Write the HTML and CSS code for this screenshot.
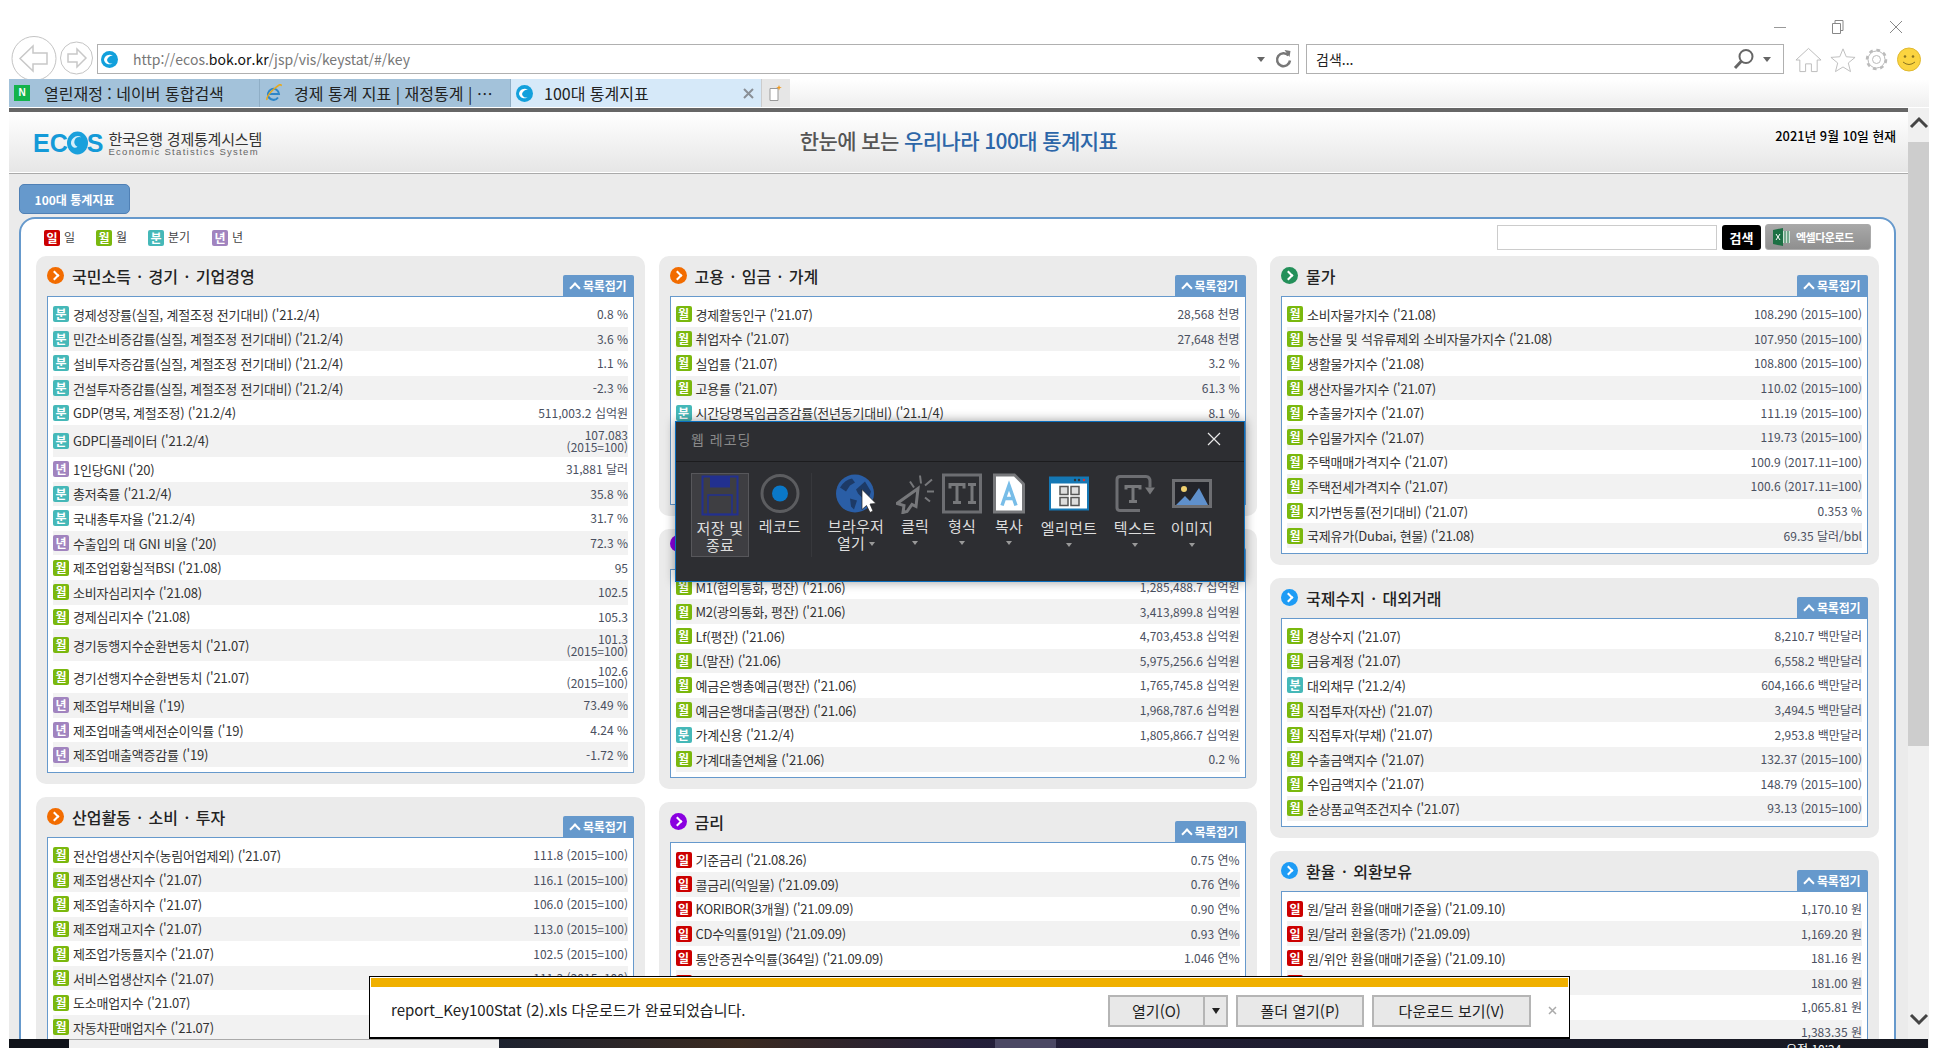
FILE: index.html
```html
<!DOCTYPE html>
<html lang="ko">
<head>
  <meta charset="UTF-8">
  <title>100대 통계지표</title>
  <link rel="stylesheet" href="styles.css">
</head>
<body>
  <header class="chrome">
    <div class="caption">
      <svg class="cap-btn" width="14" height="14" viewBox="0 0 14 14"><path d="M1 7.5h12" stroke="#999" fill="none"/></svg>
      <svg class="cap-btn" width="14" height="14" viewBox="0 0 14 14"><path d="M1.5 3.5h8v10h-8zM4 3.500V.5h8v10H9.500" stroke="#888" fill="none"/></svg>
      <svg class="cap-btn" width="14" height="14" viewBox="0 0 14 14"><path d="M1 1l12 12M13 1L1 13" stroke="#888" fill="none"/></svg>
    </div>
    <div class="navrow">
      <svg class="nav-back" width="48" height="45" viewBox="0 0 48 45"><circle cx="24" cy="22.500" r="22" fill="#fff" stroke="#c4c4c4"/><path d="M10 22.500L23 10v7h14v11H23v7z" fill="none" stroke="#c8c8c8" stroke-width="1.500"/></svg>
      <svg class="nav-fwd" width="33" height="34" viewBox="0 0 33 34"><circle cx="16.500" cy="17" r="16" fill="#fff" stroke="#c4c4c4"/><path d="M26 17l-9-9v5H8v8h9v5z" fill="none" stroke="#c8c8c8" stroke-width="1.500"/></svg>
      <div class="addr">
        <svg class="ie-ball" width="17" height="17" viewBox="0 0 17 17"><circle cx="8.500" cy="8.500" r="8.500" fill="#12a0dc"/><path d="M3 9a5.500 5.500 0 0 1 9-4 5 5 0 0 0-6 4 4 4 0 0 0 6 3 5.500 5.500 0 0 1-9-3z" fill="#fff"/></svg>
        <span class="url">http://ecos.<b>bok.or.kr</b>/jsp/vis/keystat/#/key</span>
        <span class="drop"></span>
        <svg width="18" height="20" viewBox="0 0 18 20"><path d="M13.500 6.500a6.500 6.500 0 1 0 1.500 5" fill="none" stroke="#777" stroke-width="2.500"/><path d="M9.500 1l6 1-1 6z" fill="#777"/></svg>
      </div>
      <div class="srch">
        <span class="srch-txt">검색...</span>
        <svg width="22" height="22" viewBox="0 0 22 22"><circle cx="13" cy="8.500" r="6.500" fill="none" stroke="#666" stroke-width="2"/><path d="M8.500 13L2 20" stroke="#666" stroke-width="3"/></svg>
        <span class="drop"></span>
      </div>
      <div class="tools">
        <svg width="27" height="26" viewBox="0 0 28 26"><path d="M1 13L14 1l13 12h-4v12h-6v-8h-6v8H5V13z" fill="none" stroke="#bbb"/></svg>
        <svg width="26" height="26" viewBox="0 0 28 26"><path d="M14 1l3.500 8.500 9.500.700-7.300 6 2.400 9.300L14 20.500l-8.100 5 2.400-9.300-7.300-6 9.500-.700z" fill="none" stroke="#bbb"/></svg>
        <svg width="25" height="25" viewBox="0 0 25 25"><circle cx="12.500" cy="12.500" r="9" fill="none" stroke="#bbb" stroke-width="3.500" stroke-dasharray="3.500 3.500"/><circle cx="12.500" cy="12.500" r="8.500" fill="#fff" stroke="#bbb"/><circle cx="12.500" cy="12.500" r="4" fill="none" stroke="#bbb"/></svg>
        <svg width="24" height="25" viewBox="0 0 24 25"><circle cx="12" cy="12.500" r="11.500" fill="#fbd440" stroke="#e0b930"/><circle cx="8" cy="9.500" r="1.300" fill="#8a7420"/><circle cx="16" cy="9.500" r="1.300" fill="#8a7420"/><path d="M6 15q6 5 12 0" fill="none" stroke="#8a7420"/></svg>
      </div>
    </div>
    <div class="tabrow">
      <div class="tab">
        <i class="n-ico">N</i><span class="tab-txt">열린재정 : 네이버 통합검색</span>
      </div>
      <div class="tab">
        <svg class="tab-ico" width="17" height="18" viewBox="0 0 17 18"><path d="M3 10h11a5.500 5.500 0 1 0-1 3.500M3 10a5.500 5.500 0 0 0 10 3.500" fill="none" stroke="#2f86c8" stroke-width="2"/><path d="M2 16Q1 12 9 5t7-3" fill="none" stroke="#e8a91c" stroke-width="1.500"/></svg>
        <span class="tab-txt ellip">경제 통계 지표 | 재정통계 | 기획재정부</span>
      </div>
      <div class="tab tab-on">
        <svg class="tab-ico" width="17" height="17" viewBox="0 0 17 17"><circle cx="8.500" cy="8.500" r="8.500" fill="#12a0dc"/><path d="M3 9a5.500 5.500 0 0 1 9-4 5 5 0 0 0-6 4 4 4 0 0 0 6 3 5.500 5.500 0 0 1-9-3z" fill="#fff"/></svg>
        <span class="tab-txt">100대 통계지표</span>
        <svg class="tab-x" width="11" height="11" viewBox="0 0 11 11"><path d="M1 1l9 9M10 1l-9 9" stroke="#8a8f96" stroke-width="2"/></svg>
      </div>
      <div class="tab-new">
        <svg width="14" height="18" viewBox="0 0 14 18"><path d="M1 4.500h8v12H1z" fill="#fff" stroke="#999"/><path d="M10 1l.800 2 2 .500-2 .800L10 6.500l-.800-2.200-2-.800 2-.500z" fill="#f09a20"/></svg>
      </div>
      <div class="tab-fill"></div>
    </div>
  </header>

  <div class="content">
    <div class="page">
      <div class="top-line"></div>
      <div class="site-head">
        <div class="logo">
          <div class="logo-mark">EC<svg width="21" height="24" viewBox="0 0 22 24"><ellipse cx="11" cy="12" rx="11" ry="12" fill="#1aa0dc"/><path d="M5 15a7 7 0 0 1 10-9 5 5 0 0 0-4 10 4 4 0 0 1-6-1z" fill="#d6eefa"/></svg>S</div>
          <div class="logo-txt">
            <strong>한국은행 경제통계시스템</strong>
            <span>Economic Statistics System</span>
          </div>
        </div>
        <h1 class="site-title">한눈에 보는 <em>우리나라 100대 통계지표</em></h1>
        <div class="site-date">2021년 9월 10일 현재</div>
      </div>

      <main class="main">
        <button class="main-tab">100대 통계지표</button>
        <section class="board">
          <div class="board-bar">
            <ul class="legend">
              <li><i class="chip day">일</i>일</li>
              <li><i class="chip mon">월</i>월</li>
              <li><i class="chip qtr">분</i>분기</li>
              <li><i class="chip yr">년</i>년</li>
            </ul>
            <div class="board-tools">
              <input class="find" type="text">
              <button class="find-btn">검색</button>
              <button class="xls-btn">
                <svg width="17" height="18" viewBox="0 0 17 18"><path d="M0 2l10-2v18L0 16z" fill="#1d7044"/><path d="M3 6l4 6M7 6l-4 6" stroke="#fff"/><path d="M10 3h7v12h-7z" fill="#cfe3d6"/><path d="M12 3v12M15 3v12" stroke="#1d7044"/></svg>엑셀다운로드
              </button>
            </div>
          </div>

          <div class="cols">
            <div class="col">
              <article class="panel">
                <div class="panel-head">
                  <h2 class="panel-title"><i class="dot orange"></i>국민소득 · 경기 · 기업경영</h2>
                  <button class="fold">목록접기</button>
                </div>
                <ul class="rows">
                  <li class="row"><i class="chip qtr">분</i><span class="lbl">경제성장률(실질, 계절조정 전기대비) ('21.2/4)</span><span class="val">0.8 %</span></li>
                  <li class="row"><i class="chip qtr">분</i><span class="lbl">민간소비증감률(실질, 계절조정 전기대비) ('21.2/4)</span><span class="val">3.6 %</span></li>
                  <li class="row"><i class="chip qtr">분</i><span class="lbl">설비투자증감률(실질, 계절조정 전기대비) ('21.2/4)</span><span class="val">1.1 %</span></li>
                  <li class="row"><i class="chip qtr">분</i><span class="lbl">건설투자증감률(실질, 계절조정 전기대비) ('21.2/4)</span><span class="val">-2.3 %</span></li>
                  <li class="row"><i class="chip qtr">분</i><span class="lbl">GDP(명목, 계절조정) ('21.2/4)</span><span class="val">511,003.2 십억원</span></li>
                  <li class="row tall"><i class="chip qtr">분</i><span class="lbl">GDP디플레이터 ('21.2/4)</span><span class="val">107.083<br>(2015=100)</span></li>
                  <li class="row"><i class="chip yr">년</i><span class="lbl">1인당GNI ('20)</span><span class="val">31,881 달러</span></li>
                  <li class="row"><i class="chip qtr">분</i><span class="lbl">총저축률 ('21.2/4)</span><span class="val">35.8 %</span></li>
                  <li class="row"><i class="chip qtr">분</i><span class="lbl">국내총투자율 ('21.2/4)</span><span class="val">31.7 %</span></li>
                  <li class="row"><i class="chip yr">년</i><span class="lbl">수출입의 대 GNI 비율 ('20)</span><span class="val">72.3 %</span></li>
                  <li class="row"><i class="chip mon">월</i><span class="lbl">제조업업황실적BSI ('21.08)</span><span class="val">95</span></li>
                  <li class="row"><i class="chip mon">월</i><span class="lbl">소비자심리지수 ('21.08)</span><span class="val">102.5</span></li>
                  <li class="row"><i class="chip mon">월</i><span class="lbl">경제심리지수 ('21.08)</span><span class="val">105.3</span></li>
                  <li class="row tall"><i class="chip mon">월</i><span class="lbl">경기동행지수순환변동치 ('21.07)</span><span class="val">101.3<br>(2015=100)</span></li>
                  <li class="row tall"><i class="chip mon">월</i><span class="lbl">경기선행지수순환변동치 ('21.07)</span><span class="val">102.6<br>(2015=100)</span></li>
                  <li class="row"><i class="chip yr">년</i><span class="lbl">제조업부채비율 ('19)</span><span class="val">73.49 %</span></li>
                  <li class="row"><i class="chip yr">년</i><span class="lbl">제조업매출액세전순이익률 ('19)</span><span class="val">4.24 %</span></li>
                  <li class="row"><i class="chip yr">년</i><span class="lbl">제조업매출액증감률 ('19)</span><span class="val">-1.72 %</span></li>
                </ul>
              </article>
              <article class="panel">
                <div class="panel-head">
                  <h2 class="panel-title"><i class="dot orange"></i>산업활동 · 소비 · 투자</h2>
                  <button class="fold">목록접기</button>
                </div>
                <ul class="rows">
                  <li class="row"><i class="chip mon">월</i><span class="lbl">전산업생산지수(농림어업제외) ('21.07)</span><span class="val">111.8 (2015=100)</span></li>
                  <li class="row"><i class="chip mon">월</i><span class="lbl">제조업생산지수 ('21.07)</span><span class="val">116.1 (2015=100)</span></li>
                  <li class="row"><i class="chip mon">월</i><span class="lbl">제조업출하지수 ('21.07)</span><span class="val">106.0 (2015=100)</span></li>
                  <li class="row"><i class="chip mon">월</i><span class="lbl">제조업재고지수 ('21.07)</span><span class="val">113.0 (2015=100)</span></li>
                  <li class="row"><i class="chip mon">월</i><span class="lbl">제조업가동률지수 ('21.07)</span><span class="val">102.5 (2015=100)</span></li>
                  <li class="row"><i class="chip mon">월</i><span class="lbl">서비스업생산지수 ('21.07)</span><span class="val">111.3 (2015=100)</span></li>
                  <li class="row"><i class="chip mon">월</i><span class="lbl">도소매업지수 ('21.07)</span><span class="val"></span></li>
                  <li class="row"><i class="chip mon">월</i><span class="lbl">자동차판매업지수 ('21.07)</span><span class="val"></span></li>
                </ul>
              </article>
            </div>

            <div class="col">
              <article class="panel">
                <div class="panel-head">
                  <h2 class="panel-title"><i class="dot orange"></i>고용 · 임금 · 가계</h2>
                  <button class="fold">목록접기</button>
                </div>
                <ul class="rows">
                  <li class="row"><i class="chip mon">월</i><span class="lbl">경제활동인구 ('21.07)</span><span class="val">28,568 천명</span></li>
                  <li class="row"><i class="chip mon">월</i><span class="lbl">취업자수 ('21.07)</span><span class="val">27,648 천명</span></li>
                  <li class="row"><i class="chip mon">월</i><span class="lbl">실업률 ('21.07)</span><span class="val">3.2 %</span></li>
                  <li class="row"><i class="chip mon">월</i><span class="lbl">고용률 ('21.07)</span><span class="val">61.3 %</span></li>
                  <li class="row"><i class="chip qtr">분</i><span class="lbl">시간당명목임금증감률(전년동기대비) ('21.1/4)</span><span class="val">8.1 %</span></li>
                  <li class="row"></li>
                  <li class="row"></li>
                  <li class="row"></li>
                </ul>
              </article>
              <article class="panel">
                <div class="panel-head">
                  <h2 class="panel-title"><i class="dot purple"></i></h2>
                  <button class="fold">목록접기</button>
                </div>
                <ul class="rows">
                  <li class="row"><i class="chip mon">월</i><span class="lbl">M1(협의통화, 평잔) ('21.06)</span><span class="val">1,285,488.7 십억원</span></li>
                  <li class="row"><i class="chip mon">월</i><span class="lbl">M2(광의통화, 평잔) ('21.06)</span><span class="val">3,413,899.8 십억원</span></li>
                  <li class="row"><i class="chip mon">월</i><span class="lbl">Lf(평잔) ('21.06)</span><span class="val">4,703,453.8 십억원</span></li>
                  <li class="row"><i class="chip mon">월</i><span class="lbl">L(말잔) ('21.06)</span><span class="val">5,975,256.6 십억원</span></li>
                  <li class="row"><i class="chip mon">월</i><span class="lbl">예금은행총예금(평잔) ('21.06)</span><span class="val">1,765,745.8 십억원</span></li>
                  <li class="row"><i class="chip mon">월</i><span class="lbl">예금은행대출금(평잔) ('21.06)</span><span class="val">1,968,787.6 십억원</span></li>
                  <li class="row"><i class="chip qtr">분</i><span class="lbl">가계신용 ('21.2/4)</span><span class="val">1,805,866.7 십억원</span></li>
                  <li class="row"><i class="chip mon">월</i><span class="lbl">가계대출연체율 ('21.06)</span><span class="val">0.2 %</span></li>
                </ul>
              </article>
              <article class="panel">
                <div class="panel-head">
                  <h2 class="panel-title"><i class="dot purple"></i>금리</h2>
                  <button class="fold">목록접기</button>
                </div>
                <ul class="rows">
                  <li class="row"><i class="chip day">일</i><span class="lbl">기준금리 ('21.08.26)</span><span class="val">0.75 연%</span></li>
                  <li class="row"><i class="chip day">일</i><span class="lbl">콜금리(익일물) ('21.09.09)</span><span class="val">0.76 연%</span></li>
                  <li class="row"><i class="chip day">일</i><span class="lbl">KORIBOR(3개월) ('21.09.09)</span><span class="val">0.90 연%</span></li>
                  <li class="row"><i class="chip day">일</i><span class="lbl">CD수익률(91일) ('21.09.09)</span><span class="val">0.93 연%</span></li>
                  <li class="row"><i class="chip day">일</i><span class="lbl">통안증권수익률(364일) ('21.09.09)</span><span class="val">1.046 연%</span></li>
                  <li class="row"><i class="chip day">일</i><span class="lbl"></span><span class="val"></span></li>
                </ul>
              </article>
            </div>

            <div class="col">
              <article class="panel">
                <div class="panel-head">
                  <h2 class="panel-title"><i class="dot green"></i>물가</h2>
                  <button class="fold">목록접기</button>
                </div>
                <ul class="rows">
                  <li class="row"><i class="chip mon">월</i><span class="lbl">소비자물가지수 ('21.08)</span><span class="val">108.290 (2015=100)</span></li>
                  <li class="row"><i class="chip mon">월</i><span class="lbl">농산물 및 석유류제외 소비자물가지수 ('21.08)</span><span class="val">107.950 (2015=100)</span></li>
                  <li class="row"><i class="chip mon">월</i><span class="lbl">생활물가지수 ('21.08)</span><span class="val">108.800 (2015=100)</span></li>
                  <li class="row"><i class="chip mon">월</i><span class="lbl">생산자물가지수 ('21.07)</span><span class="val">110.02 (2015=100)</span></li>
                  <li class="row"><i class="chip mon">월</i><span class="lbl">수출물가지수 ('21.07)</span><span class="val">111.19 (2015=100)</span></li>
                  <li class="row"><i class="chip mon">월</i><span class="lbl">수입물가지수 ('21.07)</span><span class="val">119.73 (2015=100)</span></li>
                  <li class="row"><i class="chip mon">월</i><span class="lbl">주택매매가격지수 ('21.07)</span><span class="val">100.9 (2017.11=100)</span></li>
                  <li class="row"><i class="chip mon">월</i><span class="lbl">주택전세가격지수 ('21.07)</span><span class="val">100.6 (2017.11=100)</span></li>
                  <li class="row"><i class="chip mon">월</i><span class="lbl">지가변동률(전기대비) ('21.07)</span><span class="val">0.353 %</span></li>
                  <li class="row"><i class="chip mon">월</i><span class="lbl">국제유가(Dubai, 현물) ('21.08)</span><span class="val">69.35 달러/bbl</span></li>
                </ul>
              </article>
              <article class="panel">
                <div class="panel-head">
                  <h2 class="panel-title"><i class="dot blue"></i>국제수지 · 대외거래</h2>
                  <button class="fold">목록접기</button>
                </div>
                <ul class="rows">
                  <li class="row"><i class="chip mon">월</i><span class="lbl">경상수지 ('21.07)</span><span class="val">8,210.7 백만달러</span></li>
                  <li class="row"><i class="chip mon">월</i><span class="lbl">금융계정 ('21.07)</span><span class="val">6,558.2 백만달러</span></li>
                  <li class="row"><i class="chip qtr">분</i><span class="lbl">대외채무 ('21.2/4)</span><span class="val">604,166.6 백만달러</span></li>
                  <li class="row"><i class="chip mon">월</i><span class="lbl">직접투자(자산) ('21.07)</span><span class="val">3,494.5 백만달러</span></li>
                  <li class="row"><i class="chip mon">월</i><span class="lbl">직접투자(부채) ('21.07)</span><span class="val">2,953.8 백만달러</span></li>
                  <li class="row"><i class="chip mon">월</i><span class="lbl">수출금액지수 ('21.07)</span><span class="val">132.37 (2015=100)</span></li>
                  <li class="row"><i class="chip mon">월</i><span class="lbl">수입금액지수 ('21.07)</span><span class="val">148.79 (2015=100)</span></li>
                  <li class="row"><i class="chip mon">월</i><span class="lbl">순상품교역조건지수 ('21.07)</span><span class="val">93.13 (2015=100)</span></li>
                </ul>
              </article>
              <article class="panel">
                <div class="panel-head">
                  <h2 class="panel-title"><i class="dot blue"></i>환율 · 외환보유</h2>
                  <button class="fold">목록접기</button>
                </div>
                <ul class="rows">
                  <li class="row"><i class="chip day">일</i><span class="lbl">원/달러 환율(매매기준율) ('21.09.10)</span><span class="val">1,170.10 원</span></li>
                  <li class="row"><i class="chip day">일</i><span class="lbl">원/달러 환율(종가) ('21.09.09)</span><span class="val">1,169.20 원</span></li>
                  <li class="row"><i class="chip day">일</i><span class="lbl">원/위안 환율(매매기준율) ('21.09.10)</span><span class="val">181.16 원</span></li>
                  <li class="row"><i class="chip day">일</i><span class="lbl"></span><span class="val">181.00 원</span></li>
                  <li class="row"><i class="chip day">일</i><span class="lbl"></span><span class="val">1,065.81 원</span></li>
                  <li class="row"><i class="chip day">일</i><span class="lbl"></span><span class="val">1,383.35 원</span></li>
                </ul>
              </article>
            </div>
          </div>
        </section>
      </main>
    </div>

    <div class="scrollbar">
      <svg class="sb-arrow" width="20" height="14" viewBox="0 0 20 14"><path d="M2 11l8-8 8 8" fill="none" stroke="#444" stroke-width="3"/></svg>
      <div class="sb-thumb"></div>
      <div class="sb-track"></div>
      <svg class="sb-arrow" width="20" height="14" viewBox="0 0 20 14"><path d="M2 3l8 8 8-8" fill="none" stroke="#444" stroke-width="3"/></svg>
    </div>
  </div>

  <!-- 웹 레코딩 도구창 -->
  <aside class="recorder">
    <div class="rec-head">
      <span>웹 레코딩</span>
      <svg width="14" height="14" viewBox="0 0 14 14"><path d="M1 1l12 12M13 1L1 13" stroke="#e8e8e8" stroke-width="1.200"/></svg>
    </div>
    <div class="rec-bar">
      <div class="rec-btn rec-save">
        <svg width="38" height="41" viewBox="0 0 38 41"><path d="M1.500 1.500h35v38h-35z" fill="none" stroke="#22308f" stroke-width="2"/><path d="M9 1.500h20v11H9z" fill="#22308f"/><path d="M7 20h24v19.500H7z" fill="none" stroke="#22308f" stroke-width="1.500"/></svg>
        <span>저장 및<br>종료</span>
      </div>
      <div class="rec-btn rec-record">
        <svg width="40" height="40" viewBox="0 0 40 40"><circle cx="20" cy="20" r="18" fill="none" stroke="#5c5d60" stroke-width="3"/><circle cx="20" cy="20" r="8" fill="#0a78c8"/></svg>
        <span>레코드</span>
      </div>
      <div class="rec-sep"></div>
      <div class="rec-btn rec-browser">
        <svg width="40" height="40" viewBox="0 0 40 40"><circle cx="19" cy="20" r="19" fill="#2a5ea6"/><path d="M4 14q5-8 12-9l3 4-5 3-4 6zM20 16l9-8 6 10-2 6-6 1-5-5zM14 25l7 2-3 9-3-3z" fill="#1d3a66"/><path d="M26 16l14 14-6 .500 3 7-3 1.500-3.500-7L26 36z" fill="#fff" stroke="#222" stroke-width=".7"/></svg>
        <span>브라우저<br>열기<i class="caret"></i></span>
      </div>
      <div class="rec-btn rec-click">
        <svg width="38" height="40" viewBox="0 0 38 40"><path d="M22 15L1 30l7 2-1 7 4-1 5-7 4 2z" fill="none" stroke="#77787b" stroke-width="3"/><path d="M24 2l1 8M36 6l-7 6M38 18h-7M34 28l-5-4M14 8l4 6" stroke="#77787b" stroke-width="2"/></svg>
        <span>클릭</span><i class="caret"></i>
      </div>
      <div class="rec-btn rec-form">
        <svg width="40" height="40" viewBox="0 0 40 40"><path d="M1.500 1.500h37v37h-37z" fill="none" stroke="#6d6e72" stroke-width="3"/><path d="M8 15v-4h14v4M15 11v18M11 29h8M26 11h8M30 11v18M26 29h8" fill="none" stroke="#77787b" stroke-width="3"/></svg>
        <span>형식</span><i class="caret"></i>
      </div>
      <div class="rec-btn rec-copy">
        <svg width="32" height="40" viewBox="0 0 32 40"><path d="M0 0h22l10 10v30H0z" fill="#77787b"/><path d="M3 3h18l8 8v26H3z" fill="#fff"/><path d="M9 32l7-20 7 20M11.500 25h9" fill="none" stroke="#78bde8" stroke-width="3.500"/></svg>
        <span>복사</span><i class="caret"></i>
      </div>
      <div class="rec-btn rec-elem">
        <svg width="40" height="34" viewBox="0 0 40 34"><path d="M0 0h40v34H0z" fill="#1477b4"/><path d="M2 7h36v25H2z" fill="#fff"/><path d="M11 10h8v8h-8zM22 10h8v8h-8zM11 21h8v8h-8zM22 21h8v8h-8z" fill="#ddd" stroke="#555" stroke-width="1.500"/><circle cx="26" cy="3.500" r="1.200" fill="#333"/><circle cx="30" cy="3.500" r="1.200" fill="#333"/><circle cx="35" cy="3.500" r="1.200" fill="#e03030"/></svg>
        <span>엘리먼트</span><i class="caret"></i>
      </div>
      <div class="rec-btn rec-text">
        <svg width="41" height="38" viewBox="0 0 41 38"><path d="M31 2H5Q2 2 2 5v28q0 3 3 3h20" fill="none" stroke="#6d6e72" stroke-width="3"/><path d="M31 2q4 0 4 5v6" fill="none" stroke="#6d6e72" stroke-width="3"/><path d="M30 13h10l-5 7z" fill="#77787b"/><path d="M11 15v-3h14v3M18 12v15M14 27h8" fill="none" stroke="#77787b" stroke-width="3"/></svg>
        <span>텍스트</span><i class="caret"></i>
      </div>
      <div class="rec-btn rec-image">
        <svg width="40" height="29" viewBox="0 0 40 29"><path d="M1.500 1.500h37v26h-37z" fill="#23242a" stroke="#6d6e72" stroke-width="3"/><path d="M4 26l9-9 5 5 9-13 9 17z" fill="#5f90cc"/><circle cx="12" cy="10" r="3" fill="#f0d070"/></svg>
        <span>이미지</span><i class="caret"></i>
      </div>
    </div>
  </aside>

  <!-- IE 다운로드 알림 -->
  <aside class="dlbar">
    <div class="dl-stripe"></div>
    <div class="dl-body">
      <span class="dl-msg">report_Key100Stat (2).xls 다운로드가 완료되었습니다.</span>
      <div class="dl-split">
        <button class="dl-btn dl-open">열기(O)</button>
        <button class="dl-btn dl-more"><i></i></button>
      </div>
      <button class="dl-btn dl-folder">폴더 열기(P)</button>
      <button class="dl-btn dl-view">다운로드 보기(V)</button>
      <svg class="dl-x" width="9" height="9" viewBox="0 0 9 9"><path d="M1 1l7 7M8 1L1 8" stroke="#aaa" stroke-width="1.500"/></svg>
    </div>
  </aside>

  <footer class="taskbar">
    <div class="tb-start"></div>
    <div class="tb-search"></div>
    <div class="tb-apps">
      <div class="tb-active"></div>
    </div>
    <div class="tb-clock">오전 10:24</div>
  </footer>
</body>
</html>
```

FILE: styles.css
```css
html, body {
  margin: 0;
  height: 1048px;
  overflow: hidden;
  background: #fff;
}
body {
  position: relative;
  font-family: "Noto Sans CJK KR", "Noto Sans", sans-serif;
  font-size: 12px;
  color: #333;
}
ul { list-style: none; margin: 0; padding: 0; }
i { font-style: normal; }
button { font-family: inherit; cursor: pointer; }

/* browser chrome */
.chrome { height: 108px; background: #fff; }
.caption {
  height: 36px;
  display: flex;
  justify-content: flex-end;
  align-items: flex-start;
  padding: 20px 35px 0 0;
  box-sizing: border-box;
  gap: 38px;
}
.cap-btn { margin-left: 6px; }
.navrow {
  height: 43px;
  display: flex;
  align-items: center;
  padding-left: 10px;
}
.nav-back { margin-top: 1px; }
.nav-fwd { margin-left: 2px; margin-right: 4px; }
.addr, .srch {
  height: 30px;
  box-sizing: border-box;
  border: 1px solid #b0b0b0;
  display: flex;
  align-items: center;
  margin-top: 3px;
}
.addr { width: 1202px; padding: 0 5px 0 3px; }
.ie-ball { margin-right: 15px; }
.url { flex: 1; font-size: 14px; color: #777; }
.url b { font-weight: 400; color: #111; }
.drop {
  width: 0;
  height: 0;
  border-left: 4px solid transparent;
  border-right: 4px solid transparent;
  border-top: 5px solid #666;
  margin-right: 10px;
}
.srch { width: 478px; margin-left: 7px; padding: 0 0 0 9px; }
.srch-txt { flex: 1; font-size: 14px; color: #222; }
.srch .drop { margin: 0 12px 0 8px; }
.tools { display: flex; align-items: center; gap: 8px; margin-left: 11px; margin-top: 4px; }
.tabrow {
  height: 28px;
  margin-left: 9px;
  margin-right: 9px;
  display: flex;
  background: #fff;
}
.tab {
  width: 251px;
  height: 28px;
  box-sizing: border-box;
  background: #a3c2da;
  border-right: 1px solid #8faec6;
  display: flex;
  align-items: center;
  padding-left: 5px;
  font-size: 16px;
  color: #222;
}
.tab-on { background: #d6e9f9; border-right: 0; width: 250px; }
.tab-txt { margin-left: 14px; white-space: nowrap; }
.tab-ico + .tab-txt { margin-left: 12px; }
.ellip { width: 212px; overflow: hidden; text-overflow: ellipsis; }
.tab-on .tab-txt { margin-left: 11px; flex: 1; }
.tab-x { margin-right: 7px; }
.n-ico {
  width: 16px;
  height: 16px;
  background: #13b34c;
  color: #fff;
  font: bold 10px/16px "Liberation Sans", sans-serif;
  text-align: center;
}
.tab-ico { flex: none; }
.tab-new {
  width: 28px;
  background: #e6e6e6;
  border-left: 1px solid #ccc;
  display: flex;
  align-items: center;
  justify-content: center;
}
.tab-fill { flex: 1; background: linear-gradient(#fff, #efefef); }

/* page */
.content { display: flex; height: 940px; }
.page { width: 1899px; margin-left: 9px; overflow: hidden; background: #ebebeb; }
.top-line { height: 4px; background: #666; }
.site-head {
  height: 60px;
  background: linear-gradient(#fff, #e6e6e6);
  display: grid;
  grid-template-columns: 1fr auto 1fr;
  align-items: start;
  border-bottom: 1px solid #fff;
}
.logo { display: flex; margin: 18px 0 0 24px; }
.logo-mark {
  display: flex;
  align-items: center;
  height: 26px;
  font: bold 25px/26px "Liberation Sans", sans-serif;
  color: #149ad8;
}
.logo-mark svg { margin: 0 -1px; }
.logo-txt { margin-left: 5px; display: flex; flex-direction: column; }
.logo-txt strong { font-size: 15px; line-height: 17px; font-weight: 400; color: #333; letter-spacing: -.2px; }
.logo-txt span { font: 9.500px/10px "Liberation Sans", sans-serif; color: #666; letter-spacing: 1.300px; }
.site-title {
  margin: 15px 0 0;
  font-size: 21px;
  line-height: 27px;
  font-weight: 500;
  color: #555;
  letter-spacing: -.6px;
}
.site-title em { font-style: normal; color: #2c66a8; }
.site-date { justify-self: end; margin: 15px 12px 0 0; font-size: 12.800px; font-weight: 500; color: #000; line-height: 18px; }
.main { border-top: 1px solid #aaa; padding-left: 10px; }
.main-tab {
  display: block;
  margin-top: 10px;
  width: 111px;
  height: 30px;
  border: 1px solid #4f80b5;
  border-radius: 5px;
  background: #6699cc;
  color: #fff;
  font-size: 12px;
  font-weight: 700;
  padding: 0;
}
.board {
  width: 1877px;
  margin-top: 3px;
  box-sizing: border-box;
  border: 2px solid #6699cc;
  border-radius: 16px 16px 0 0;
  background: #fff;
  padding-bottom: 20px;
}
.board-bar {
  height: 37px;
  display: flex;
  justify-content: space-between;
  padding: 6px 23px 0 23px;
  box-sizing: border-box;
}
.legend {
  display: grid;
  grid-template-columns: 52px 52px 64px auto;
  margin-top: 5px;
  font-size: 12px;
  color: #444;
}
.legend li { display: flex; align-items: flex-start; line-height: 13px; }
.legend .chip { margin-right: 4px; }
.board-tools { display: flex; align-items: flex-start; }
.find {
  width: 220px;
  height: 25px;
  box-sizing: border-box;
  border: 1px solid #ccc;
  margin: 0;
}
.find-btn {
  width: 39px;
  height: 25px;
  margin-left: 5px;
  border: 0;
  border-radius: 3px;
  background: #000;
  color: #fff;
  font-size: 13px;
  font-weight: 700;
  padding: 0;
}
.xls-btn {
  width: 106px;
  height: 26px;
  margin-left: 4px;
  margin-top: -1px;
  border: 1px solid #aaa;
  border-radius: 3px;
  background: linear-gradient(#a8a8a8, #8f8f8f);
  color: #fff;
  font-size: 11px;
  font-weight: 700;
  display: flex;
  align-items: center;
  padding: 0 0 0 7px;
  gap: 6px;
  letter-spacing: -.5px;
}
.cols {
  display: grid;
  grid-template-columns: 609px 598px 609px;
  column-gap: 13.5px;
  padding-left: 15px;
}
.col { display: flex; flex-direction: column; gap: 13px; }
.panel {
  background: #ebebeb;
  border-radius: 10px;
  padding: 0 11px 11px;
}
.panel-head {
  height: 40px;
  display: flex;
  justify-content: space-between;
  align-items: flex-end;
}
.panel-title {
  align-self: flex-start;
  margin: 7px 0 0;
  display: flex;
  align-items: center;
  font-size: 16px;
  word-spacing: 2px;
  line-height: 26px;
  font-weight: 500;
  color: #222;
}
.dot {
  width: 17px;
  height: 17px;
  border-radius: 50%;
  margin: -1px 8px 0 0;
  position: relative;
}
.dot::after {
  content: "";
  position: absolute;
  left: 4px;
  top: 5px;
  width: 5px;
  height: 5px;
  border: solid #fff;
  border-width: 2px 2px 0 0;
  transform: rotate(45deg);
}
.orange { background: #f26c00; }
.purple { background: #8a00e0; }
.green { background: #24905a; }
.blue { background: #1e9cf5; }
.fold {
  width: 71px;
  height: 21px;
  border: 0;
  border-radius: 2px 2px 0 0;
  background: #6699cc;
  color: #fff;
  font-size: 12px;
  font-weight: 700;
  padding: 0 0 0 20px;
  position: relative;
  letter-spacing: -.2px;
  text-align: left;
  white-space: nowrap;
}
.fold::before {
  content: "";
  position: absolute;
  left: 8px;
  top: 9px;
  width: 6px;
  height: 6px;
  border: solid #fff;
  border-width: 2px 0 0 2px;
  transform: rotate(45deg);
}
.rows {
  background: #fff;
  border: 1px solid #6699cc;
  padding: 5px 5px;
}
.row {
  height: 24.600px;
  display: flex;
  align-items: center;
  font-size: 12px;
  line-height: 15px;
  white-space: nowrap;
}
.row:nth-child(even) { background: #f2f2f2; }
.tall { height: 32px; }
.lbl { margin-left: 4px; flex: 1; color: #333; font-size: 13px; letter-spacing: -.2px; }
.val { text-align: right; color: #4a5060; line-height: 12px; }
.chip {
  flex: none;
  width: 16px;
  height: 16px;
  border-radius: 2px;
  color: #fff;
  font-size: 12px;
  line-height: 16px;
  font-weight: 700;
  text-align: center;
}
.day { background: #cc0000; }
.mon { background: #7ab80e; }
.qtr { background: #45b8b8; }
.yr { background: #a184bf; }

/* scrollbar */
.scrollbar { width: 21px; display: flex; flex-direction: column; align-items: center; background: #f0f0f0; padding-bottom: 10px; box-sizing: border-box; }
.sb-arrow { flex: none; margin: 8px 0 12px; }
.sb-thumb { width: 100%; height: 604px; background: #cdcdcd; }
.sb-track { flex: 1; }

/* recorder window */
.recorder {
  position: absolute;
  left: 675px;
  top: 421px;
  width: 570px;
  height: 161px;
  box-sizing: border-box;
  border: 1px solid #0a6ebd;
  background: #2d2e32;
  box-shadow: 0 0 10px rgba(0, 0, 0, .4);
  color: #ddd;
  font-size: 15px;
}
.rec-head {
  height: 40px;
  box-sizing: border-box;
  border-bottom: 1px solid #1c1c1e;
  display: flex;
  justify-content: space-between;
  align-items: center;
  padding: 0 23px 6px 15px;
  font-size: 14px;
  color: #8a8a8a;
  letter-spacing: 1px;
}
.rec-bar { display: flex; padding: 11px 0 0 15px; }
.rec-btn {
  display: flex;
  flex-direction: column;
  align-items: center;
  text-align: center;
  line-height: 17px;
  white-space: nowrap;
  height: 84px;
  box-sizing: border-box;
  letter-spacing: .3px;
}
.rec-btn svg { flex: none; height: 41px; margin-bottom: 3px; }
.rec-save { width: 58px; background: #3e3e42; border: 1px solid #57575b; padding-top: 1px; line-height: 17px; }
.rec-record { width: 62px; }
.rec-sep { width: 1px; height: 84px; background: #37383c; margin: 0 13px 0 0; }
.rec-browser { width: 62px; }
.rec-click { width: 50px; margin-left: 3px; }
.rec-form { width: 44px; margin-left: 0; }
.rec-copy { width: 44px; margin-left: 3px; }
.rec-elem { width: 64px; margin-left: 6px; }
.rec-text { width: 58px; margin-left: 5px; }
.rec-image { width: 50px; margin-left: 3px; }
.rec-elem svg, .rec-text svg, .rec-image svg { margin-bottom: 5px; }
.caret {
  display: inline-block;
  width: 0;
  height: 0;
  border-left: 3.500px solid transparent;
  border-right: 3.500px solid transparent;
  border-top: 4px solid #999;
  margin: 7px 0 0;
}
.rec-browser .caret { margin: 0 0 3px 4px; }

/* download notification */
.dlbar {
  position: absolute;
  left: 369px;
  top: 976px;
  width: 1201px;
  height: 63px;
  box-sizing: border-box;
  border: 1px solid #000;
  border-bottom-width: 2px;
  background: #fff;
  padding: 1px;
}
.dl-stripe { height: 9px; background: #f0b000; }
.dl-body {
  display: flex;
  align-items: center;
  height: 47px;
  padding-left: 20px;
}
.dl-msg { flex: 1; font-size: 15px; color: #222; margin-top: -2px; }
.dl-split { display: flex; }
.dl-btn {
  height: 32px;
  border: 2px solid #b5b5b5;
  background: #e8e8e8;
  color: #222;
  font-size: 15px;
  padding: 0;
}
.dl-open { width: 97px; }
.dl-more { width: 23px; border-left-width: 0; display: flex; align-items: center; justify-content: center; }
.dl-more i {
  width: 0;
  height: 0;
  border-left: 4px solid transparent;
  border-right: 4px solid transparent;
  border-top: 6px solid #222;
}
.dl-folder { width: 128px; margin-left: 8px; }
.dl-view { width: 159px; margin-left: 8px; }
.dl-x { margin: 0 11px 0 17px; }

/* windows taskbar */
.taskbar {
  position: absolute;
  left: 9px;
  width: 1919px;
  bottom: 0;
  height: 9px;
  display: flex;
  background: linear-gradient(90deg, #1c2230 25%, #3a2a20 38%, #241f3a 50%, #1c1c2c 75%, #161820);
  overflow: hidden;
}
.tb-start { width: 60px; background: #10131a; }
.tb-search { width: 430px; background: #f0f0f0; border-top: 1px solid #aaa; box-sizing: border-box; }
.tb-apps { flex: 1; padding-left: 496px; }
.tb-active { width: 61px; height: 9px; background: #4b4864; }
.tb-clock { position: absolute; left: 1777px; top: 1px; font-size: 12px; color: #fff; line-height: 18px; }
```
